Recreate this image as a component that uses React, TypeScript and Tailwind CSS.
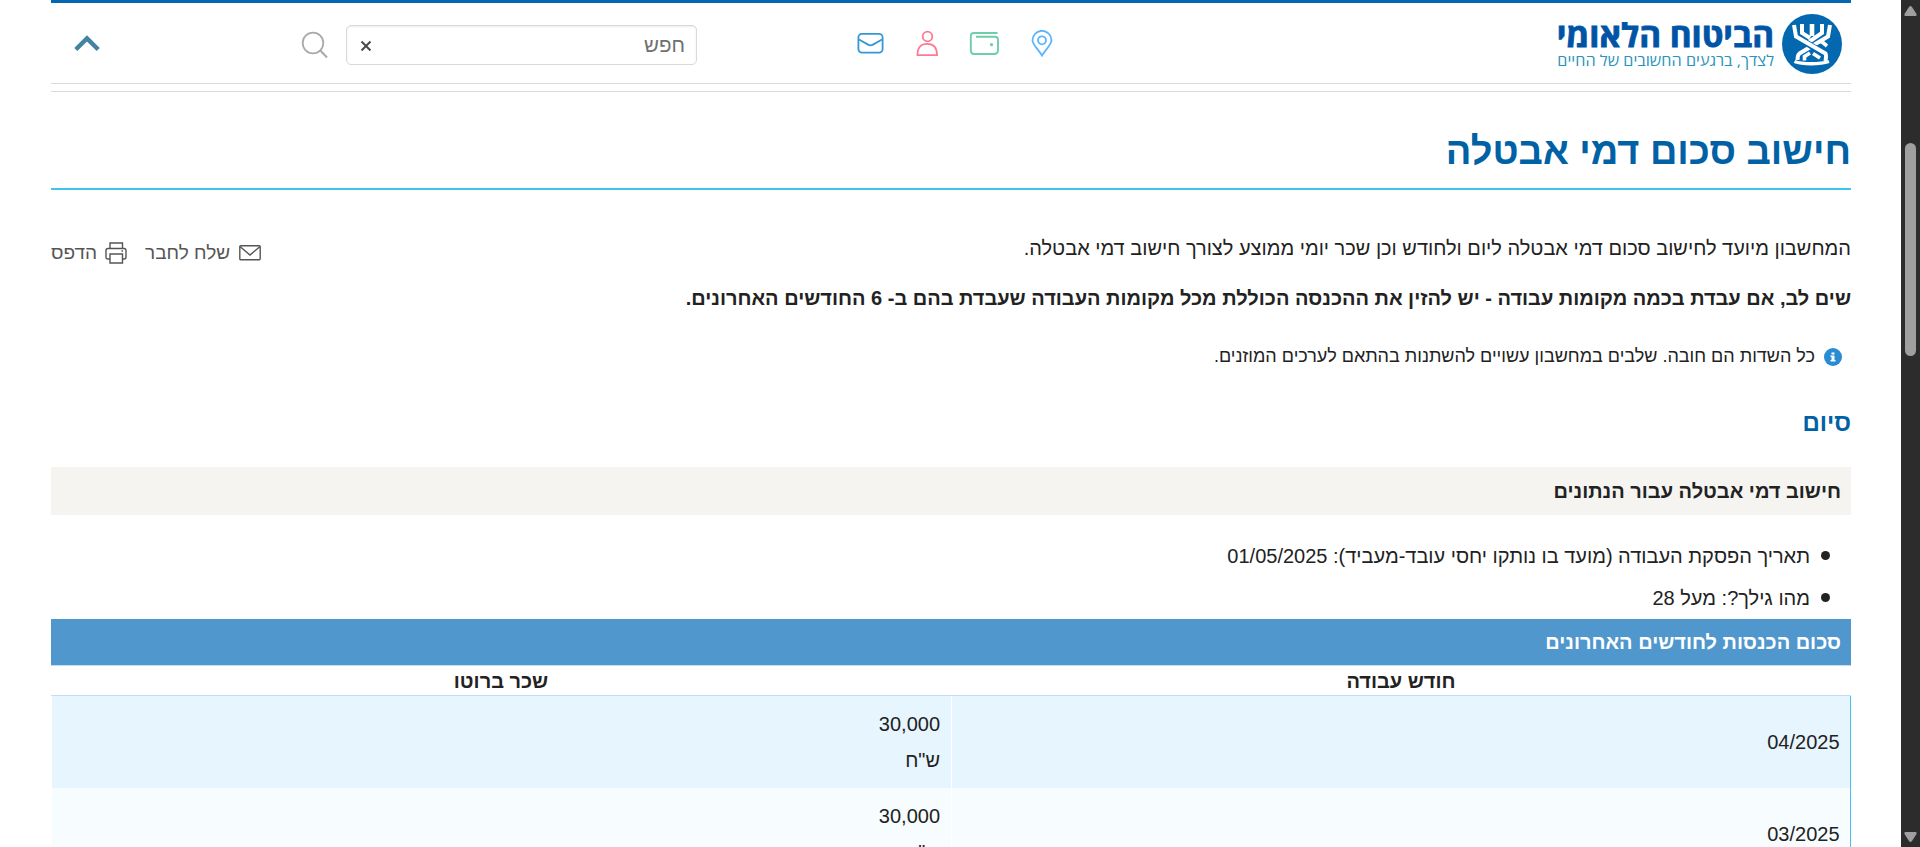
import React from "react";

const rows = [
  { month: "04/2025", amount: "30,000", tone: "bg-[#e6f5fe]" },
  { month: "03/2025", amount: "30,000", tone: "bg-[#f7fcff]" },
];

function Emblem() {
  return (
    <svg className="h-[60px] w-[60px] shrink-0" viewBox="0 0 60 60" fill="none">
      <circle cx="30" cy="30" r="30" fill="#0468b1" />
      <g stroke="#fff" strokeWidth="4">
        <path d="M48 11L46 22.500L17.500 39.500Q15.500 41 15.500 46" />
        <path d="M40 10V19L26 28.500" />
        <path d="M12 11L14 22.500L43.500 40.500V46.500" stroke="#0468b1" strokeWidth="6.500" />
        <path d="M12 11L14 22.500L43.500 39.500Q44.500 41 43.500 47" />
        <path d="M20 10V19L28 24" />
        <path d="M30 10V22" strokeWidth="4.600" />
        <path d="M36.500 28.500L39 27L45 32" strokeWidth="3.600" />
        <path d="M22.500 46.500V42.500L28 39" strokeWidth="3.600" />
        <path d="M31 39.500L38 44" strokeWidth="3.600" />
        <path d="M12.500 47.500C20 50.500 38 50.500 47 47.500" strokeWidth="3.400" />
      </g>
    </svg>
  );
}

function Header() {
  return (
    <header className="flex h-[84px] shrink-0 items-start border-b border-[#d9d9d9] border-t-[3px] border-t-[#0367b1]">
      <div className="flex w-[797px] pt-[11px] pr-[9px]">
        <Emblem />
        <div className="mr-[8px] w-[220px] pt-[3px] font-['Open_Sans']">
          <div className="origin-right scale-x-[1.04] whitespace-nowrap text-[32px] leading-[35px] font-bold text-[#0054a6] [-webkit-text-stroke:0.8px_#0054a6]">הביטוח הלאומי</div>
          <div className="origin-right scale-x-[1.08] whitespace-nowrap text-[15px] leading-[17px] text-[#2a93bb]">לצדך, ברגעים החשובים של החיים</div>
        </div>
      </div>
      <nav className="mr-px flex w-[196px] justify-between pt-[27px]">
        <svg className="h-[27px] w-[22px]" viewBox="0 0 22 27" fill="none" stroke="#5cb5ff" strokeWidth="1.800">
          <path d="M11 25.500C8 20 1.500 15 1.500 10.300A9.500 9.500 0 0 1 20.500 10.300C20.500 15 14 20 11 25.500Z" />
          <circle cx="11" cy="10.300" r="4" />
        </svg>
        <svg className="h-[26px] w-[30px]" viewBox="0 0 30 26" fill="none" stroke="#70cda9" strokeWidth="1.900">
          <path d="M28.500 3H5C2.500 3 1.800 4 1.800 6V20C1.800 23 3 24 5 24H25C28 24 29 23 29 20V10C29 7.500 28 6.700 26 6.700H7" />
          <circle cx="22.500" cy="14.700" r="1.600" fill="#70cda9" stroke="none" />
        </svg>
        <svg className="h-[27px] w-[22px]" viewBox="0 0 22 27" fill="none" stroke="#ff7894" strokeWidth="1.800">
          <circle cx="11.500" cy="6.500" r="4.800" />
          <path d="M1.500 25.200C1.500 17.500 4.500 13.900 11.300 13.900S21 17.500 21 25.200Z" />
        </svg>
        <svg className="h-[26px] w-[27px]" viewBox="0 0 27 26" fill="none" stroke="#3498d8" strokeWidth="1.800">
          <rect x="1.400" y="3.800" width="24.200" height="18.800" rx="3.500" />
          <path d="M2 9.500L11 14.600Q13.500 16 16 14.600L25 9.500" />
        </svg>
      </nav>
      <div className="mr-[160px] mt-[22px] flex h-10 w-[351px] shrink-0 items-center justify-between rounded-[5px] border border-[#d9d9d9] pr-[11px] pl-[13px] shadow-[inset_0_1px_2px_rgba(0,0,0,0.075)]">
        <span className="text-[20.5px] text-[#6f6f6f]">חפש</span>
        <svg className="h-3 w-3" viewBox="0 0 12 12" stroke="#4a4a4a" strokeWidth="2">
          <path d="M1.500 2.500L10.500 11.500M10.500 2.500L1.500 11.500" />
        </svg>
      </div>
      <svg className="mr-[17px] mt-[28px] h-[28px] w-[28px] shrink-0" viewBox="0 0 28 28" fill="none" stroke="#aaa" strokeWidth="1.800">
        <circle cx="12" cy="12" r="10.300" />
        <path d="M19.300 19.500L26 26.500" strokeWidth="2" />
      </svg>
      <svg className="mr-auto ml-[22px] mt-[30px] h-[20px] w-[28px] shrink-0" viewBox="0 0 28 20" fill="none" stroke="#4583a3" strokeWidth="4.500">
        <path d="M2.800 16.500L14 5.500L25.200 16.500" strokeLinecap="butt" />
      </svg>
    </header>
  );
}

function Scrollbar() {
  return (
    <aside className="flex h-[847px] w-[19px] shrink-0 flex-col items-center bg-[#2c2c2c]">
      <svg className="mt-[6px] h-[10px] w-[13px]" viewBox="0 0 13 10" fill="#9f9f9f">
        <path d="M5 1Q6.500-1 8 1L12.500 8Q13 10 11.500 10H1.500Q0 10 .5 8Z" />
      </svg>
      <div className="mt-[127px] h-[213px] w-[11px] rounded-full bg-[#9f9f9f]" />
      <svg className="mt-auto mb-[5px] h-[10px] w-[13px] rotate-180" viewBox="0 0 13 10" fill="#9f9f9f">
        <path d="M5 1Q6.500-1 8 1L12.500 8Q13 10 11.500 10H1.500Q0 10 .5 8Z" />
      </svg>
    </aside>
  );
}

export default function App() {
  return (
    <div dir="rtl" className="flex h-[847px] w-[1920px] overflow-hidden bg-white font-['Liberation_Sans',sans-serif] text-[20px] text-[#222]">
      <Scrollbar />
      <main className="mr-[50px] flex w-[1800px] shrink-0 flex-col">
        <Header />
        <div className="mt-[7px] h-px shrink-0 bg-[#d9d9d9]" />
        <h1 className="flex h-[98px] shrink-0 items-center border-b-2 border-[#40c4ef] pt-[22px] text-[38px] font-bold text-[#0062a5]">חישוב סכום דמי אבטלה</h1>
        <section className="flex h-[83px] shrink-0 items-end justify-between">
          <p className="h-[40px] leading-[30px]">המחשבון מיועד לחישוב סכום דמי אבטלה ליום ולחודש וכן שכר יומי ממוצע לצורך חישוב דמי אבטלה.</p>
          <div className="flex h-[40px] items-start pt-[7px] text-[19px] leading-[26px] text-[#555]">
            <svg className="mt-[5px] ml-[9px] h-[16px] w-[22px]" viewBox="0 0 22 16" fill="none" stroke="#555" strokeWidth="1.400">
              <rect x=".8" y=".8" width="20.400" height="14" rx="1" />
              <path d="M1 1.500L11 10L21 1.500" />
            </svg>
            <span>שלח לחבר</span>
            <svg className="mt-[2px] mr-[18px] ml-[8px] h-[22px] w-[22px]" viewBox="0 0 22 22" fill="none" stroke="#555" strokeWidth="1.400">
              <path d="M5 6.500V1H17.500V6.500M5 17H3Q1 17 1 15V8.500Q1 6.500 3 6.500H19Q21 6.500 21 8.500V15Q21 17 19 17H17.500" />
              <path d="M5 12H17.500V21H5ZM16.500 9H18" />
            </svg>
            <span>הדפס</span>
          </div>
        </section>
        <p className="mt-[10px] h-[30px] shrink-0 leading-[30px] font-bold">שים לב, אם עבדת בכמה מקומות עבודה - יש להזין את ההכנסה הכוללת מכל מקומות העבודה שעבדת בהם ב- 6 החודשים האחרונים.</p>
        <div className="mt-[28px] flex h-[30px] shrink-0 items-center pr-[9px] text-[18px] leading-[30px]">
          <svg className="ml-[9px] mt-[2px] h-[18px] w-[18px]" viewBox="0 0 18 18">
            <circle cx="9" cy="9" r="9" fill="#288bd4" />
            <path d="M7.500 4.500H10.500V6.500H7.500ZM6.500 7.500H10.500V12H11.500V13.500H6.500V12H7.500V9H6.500Z" fill="#fff" />
          </svg>
          <span>כל השדות הם חובה. שלבים במחשבון עשויים להשתנות בהתאם לערכים המוזנים.</span>
        </div>
        <h2 className="mt-[36px] h-[32px] shrink-0 text-[24px] leading-[32px] font-bold text-[#0062a5]">סיום</h2>
        <h3 className="mt-[28px] flex h-[48px] shrink-0 items-center bg-[#f6f4f0] pr-[10px] font-bold">חישוב דמי אבטלה עבור הנתונים</h3>
        <ul className="mt-[20px] h-[84px] shrink-0 pr-[21px] leading-[42px]">
          {["תאריך הפסקת העבודה (מועד בו נותקו יחסי עובד-מעביד): 01/05/2025", "מהו גילך?: מעל 28"].map((item) => (
            <li key={item} className="flex items-center gap-[11px]">
              <span className="mb-px h-[9px] w-[9px] rounded-full bg-[#222]" />
              <span>{item}</span>
            </li>
          ))}
        </ul>
        <div className="flex h-[46px] shrink-0 items-center bg-[#5097cd] pr-[10px] font-bold text-white">סכום הכנסות לחודשים האחרונים</div>
        <div className="grid h-[31px] shrink-0 grid-cols-2 items-center border-y border-[#c5deed] text-center leading-[28px] font-bold">
          <div>חודש עבודה</div>
          <div>שכר ברוטו</div>
        </div>
        <div className="flex shrink-0 flex-col border-r border-[#40c4ef]">
          {rows.map((row) => (
            <div key={row.month} className="grid h-[92px] grid-cols-2 leading-[36px]">
              <div className={`flex items-center border-l border-white pr-[10.5px] ${row.tone}`}>{row.month}</div>
              <div className={`ml-px py-[10px] pr-[10.5px] ${row.tone}`}>
                <div>{row.amount}</div>
                <div>ש"ח</div>
              </div>
            </div>
          ))}
        </div>
      </main>
    </div>
  );
}
